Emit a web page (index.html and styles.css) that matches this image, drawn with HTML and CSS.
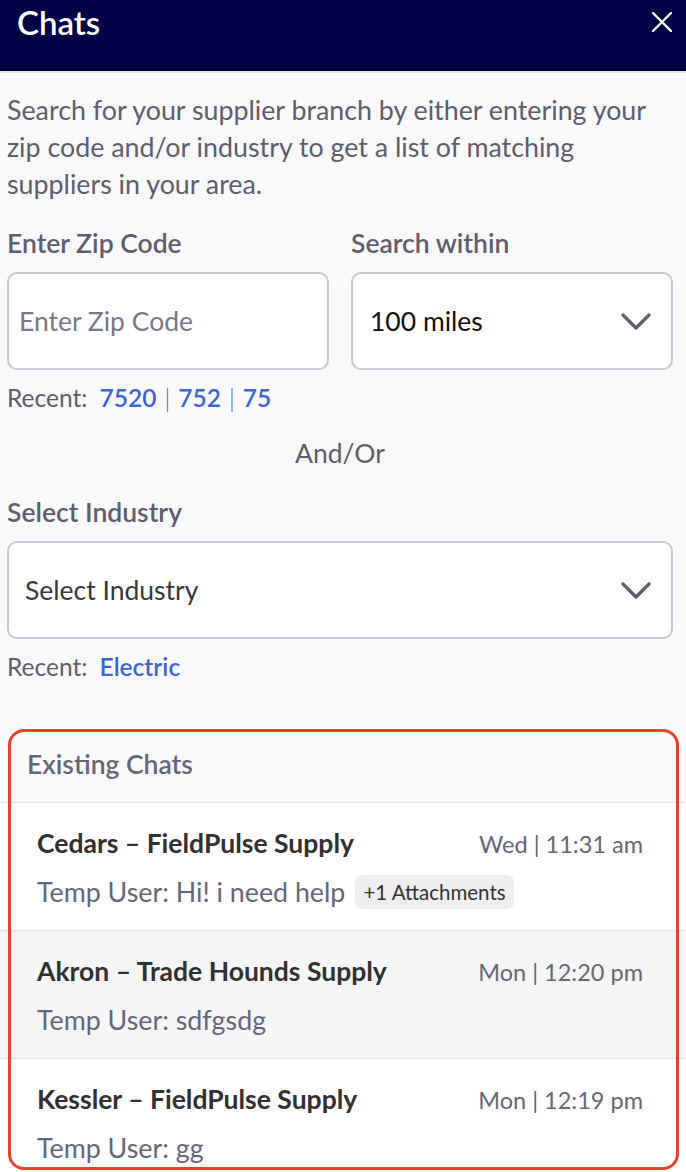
FILE: index.html
```html
<!DOCTYPE html>
<html lang="en">
<head>
  <meta charset="UTF-8">
  <meta name="viewport" content="width=device-width, initial-scale=1">
  <title>Chats</title>
  <link rel="stylesheet" href="styles.css">
</head>
<body>

  <header class="topbar">
    <h1>Chats</h1>
    <button class="close" aria-label="Close">
      <svg width="22" height="22" viewBox="0 0 22 22"><path d="M2 2 L20 20 M20 2 L2 20" stroke="#fff" stroke-width="2.4" stroke-linecap="round"/></svg>
    </button>
  </header>

  <main class="search">
    <p class="intro">Search for your supplier branch by either entering your zip code and/or industry to get a list of matching suppliers in your area.</p>

    <div class="fields">
      <div class="field">
        <label for="zip">Enter Zip Code</label>
        <input id="zip" type="text" placeholder="Enter Zip Code">
      </div>
      <div class="field">
        <label>Search within</label>
        <div class="select">
          <span class="value">100 miles</span>
          <svg class="chev" width="30" height="18" viewBox="0 0 30 18"><path d="M2 2 L15 15 L28 2" fill="none" stroke="#5d5d6f" stroke-width="3.2" stroke-linecap="round" stroke-linejoin="round"/></svg>
        </div>
      </div>
    </div>
    <p class="recent">Recent: <a href="#">7520</a><span class="sep">|</span><a href="#">752</a><span class="sep">|</span><a href="#">75</a></p>

    <p class="andor">And/Or</p>

    <div class="field">
      <label>Select Industry</label>
      <div class="select wide">
        <span class="value muted">Select Industry</span>
        <svg class="chev" width="30" height="18" viewBox="0 0 30 18"><path d="M2 2 L15 15 L28 2" fill="none" stroke="#5d5d6f" stroke-width="3.2" stroke-linecap="round" stroke-linejoin="round"/></svg>
      </div>
    </div>
    <p class="recent">Recent: <a href="#">Electric</a></p>
  </main>

  <section class="chats">
    <h2>Existing Chats</h2>
    <div class="chat">
      <div class="line">
        <span class="name">Cedars – FieldPulse Supply</span>
        <span class="time">Wed | 11:31 am</span>
      </div>
      <div class="msg">Temp User: Hi! i need help <span class="chip">+1 Attachments</span></div>
    </div>
    <div class="chat alt">
      <div class="line">
        <span class="name">Akron – Trade Hounds Supply</span>
        <span class="time">Mon | 12:20 pm</span>
      </div>
      <div class="msg">Temp User: sdfgsdg</div>
    </div>
    <div class="chat">
      <div class="line">
        <span class="name">Kessler – FieldPulse Supply</span>
        <span class="time">Mon | 12:19 pm</span>
      </div>
      <div class="msg">Temp User: gg</div>
    </div>
    <div class="highlight"></div>
  </section>

</body>
</html>
```

FILE: styles.css
```css
* { box-sizing: border-box; }
body {
  margin: 0;
  height: 1172px;
  overflow: hidden;
  font-family: Lato, "Noto Sans", sans-serif;
  background: #f9f9fa;
  color: #5d5d6f;
}
.topbar {
  display: flex;
  justify-content: space-between;
  align-items: flex-start;
  height: 73px;
  background: #010146;
  border-bottom: 2px solid #e3e3e9;
  padding: 0 13px 0 17px;
}
.topbar h1 {
  margin: 0;
  color: #fff;
  font-size: 33px;
  font-weight: 600;
  line-height: 44px;
}
.close {
  background: none;
  border: none;
  padding: 0;
  margin-top: 11px;
  cursor: pointer;
  display: flex;
}
.search {
  padding: 19px 13px 0 7px;
}
.intro {
  margin: 0;
  font-size: 26.8px;
  line-height: 37px;
}
.fields {
  display: grid;
  grid-template-columns: 1fr 1fr;
  gap: 22px;
  margin-top: 23px;
}
.field label {
  display: block;
  font-size: 26.5px;
  font-weight: 600;
  line-height: 34px;
  margin-bottom: 12px;
}
.field input, .select {
  width: 100%;
  height: 98px;
  border: 2px solid #c6c8d4;
  border-radius: 10px;
  background: #fff;
  font-family: inherit;
  font-size: 26.5px;
}
.field input {
  padding: 0 10px;
  color: #222;
}
.field input::placeholder { color: #77778a; }
.select {
  display: flex;
  align-items: center;
  justify-content: space-between;
  padding: 0 20px 0 17px;
  color: #111;
}
.select.wide { padding-left: 16px; }
.select .muted { color: #38383f; }
.chev { margin-top: 2px; }
.search > .field { margin-top: 25px; }
.recent {
  margin: 11px 0 0;
  font-size: 24.5px;
  line-height: 34px;
}
.recent a {
  color: #3a66d3;
  font-weight: 600;
  text-decoration: none;
  margin-left: 6px;
}
.recent .sep {
  color: #5d5d6f;
  margin: 0 0 0 8px;
  font-weight: 300;
}
.recent .sep + a { margin-left: 8px; }
.andor {
  margin: 21px 0 0;
  text-align: center;
  font-size: 26.5px;
  line-height: 34px;
}
.chats {
  position: relative;
  margin-top: 46px;
}
.chats h2 {
  margin: 0;
  padding: 0 27px;
  height: 73px;
  line-height: 69px;
  font-size: 26.5px;
  font-weight: 600;
  color: #66667a;
  border-bottom: 1px solid #e2e2ea;
}
.chat {
  height: 128px;
  background: #fff;
  padding: 22px 43px 0 37px;
  border-bottom: 1px solid #e2e2ea;
}
.chat.alt { background: #f5f5f6; }
.line {
  display: flex;
  justify-content: space-between;
  align-items: baseline;
  line-height: 36px;
}
.name {
  font-size: 26.5px;
  font-weight: 700;
  color: #303033;
}
.time {
  font-size: 23.5px;
  color: #66667a;
}
.msg {
  margin-top: 12px;
  font-size: 26.8px;
  line-height: 36px;
  color: #66667a;
  display: flex;
  align-items: center;
  gap: 10px;
}
.chip {
  background: #eeeef0;
  color: #333;
  font-size: 20.5px;
  line-height: 34px;
  padding: 0 8px;
  border-radius: 7px;
}
.highlight {
  position: absolute;
  left: 8px;
  right: 7px;
  top: -1px;
  height: 441px;
  border: 3px solid #e8412c;
  border-radius: 16px;
  pointer-events: none;
}
```
